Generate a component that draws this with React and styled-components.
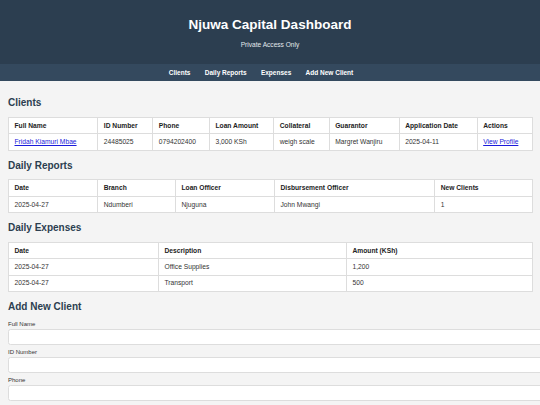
import React from "react";
import styled, { createGlobalStyle } from "styled-components";

const GlobalStyle = createGlobalStyle`
  body {
    margin: 0;
    background: #f4f4f4;
    font-family: "Liberation Sans", Arial, sans-serif;
    color: #333;
  }
`;

const Header = styled.header`
  background: #2c3e50;
  color: #fff;
  height: 64px;
  display: flex;
  flex-direction: column;
  align-items: center;
  box-sizing: border-box;
  padding-top: 17px;
`;

const Title = styled.h1`
  margin: 0;
  font-size: 13.5px;
  line-height: 16px;
  font-weight: bold;
`;

const Subtitle = styled.p`
  margin: 8px 0 0;
  font-size: 6.6px;
  line-height: 8px;
  color: #e3e8ec;
`;

const Nav = styled.nav`
  background: #34495e;
  height: 17px;
  display: flex;
  align-items: center;
  justify-content: center;
  gap: 14.3px;
  padding-right: 18px;
`;

const NavLink = styled.a`
  color: #fff;
  font-size: 6.5px;
  font-weight: bold;
  text-decoration: none;
`;

const Main = styled.main`
  padding: 7.5px 8px 20px;
`;

const SectionTitle = styled.h2`
  margin: 8.7px 0 8.3px;
  font-size: 10px;
  line-height: 11.6px;
  color: #2c3e50;
  font-weight: bold;
`;

const Table = styled.table`
  width: 524px;
  table-layout: fixed;
  border-collapse: collapse;
  background: #fff;
  font-size: 6.7px;
`;

const Col = styled.col`
  width: ${({ $w }) => $w}px;
`;

const Th = styled.th`
  border: 1px solid #ddd;
  padding: 3.8px 5.5px;
  text-align: left;
  font-weight: bold;
  color: #222;
  line-height: 7.8px;
`;

const Td = styled.td`
  border: 1px solid #ddd;
  padding: 3.8px 5.5px;
  line-height: 7.8px;
  color: #333;
  white-space: nowrap;
  overflow: hidden;
`;

const Link = styled.a`
  color: #1a1adb;
  text-decoration: underline;
`;

const Form = styled.form`
  display: flex;
  flex-direction: column;
`;

const Label = styled.label`
  display: block;
  font-size: 6px;
  line-height: 6px;
  margin: 0 0 2px;
  color: #333;
`;

const Input = styled.input`
  display: block;
  width: 100%;
  height: 14px;
  padding: 0 5.5px;
  margin: 0 0 4.2px;
  border: 1px solid #ddd;
  border-radius: 2.5px;
  background: #fff;
  font-size: 6.7px;
  font-family: inherit;
`;

const clientCols = [
  ["Full Name", 89.3],
  ["ID Number", 55],
  ["Phone", 56.7],
  ["Loan Amount", 64.3],
  ["Collateral", 55.4],
  ["Guarantor", 70],
  ["Application Date", 78],
  ["Actions", 55.3],
];

const reportCols = [
  ["Date", 89.2],
  ["Branch", 77.8],
  ["Loan Officer", 99],
  ["Disbursement Officer", 160.2],
  ["New Clients", 97.8],
];

const expenseCols = [
  ["Date", 150],
  ["Description", 188],
  ["Amount (KSh)", 186],
];

const expenses = [
  ["2025-04-27", "Office Supplies", "1,200"],
  ["2025-04-27", "Transport", "500"],
];

const fields = [
  "Full Name",
  "ID Number",
  "Phone",
  "Loan Amount",
  "Collateral",
  "Guarantor",
  "Application Date",
];

const Head = ({ cols }) => (
  <>
    <colgroup>
      {cols.map(([name, w]) => (
        <Col key={name} $w={w} />
      ))}
    </colgroup>
    <thead>
      <tr>
        {cols.map(([name]) => (
          <Th key={name}>{name}</Th>
        ))}
      </tr>
    </thead>
  </>
);

export default function App() {
  return (
    <>
      <GlobalStyle />
      <Header>
        <Title>Njuwa Capital Dashboard</Title>
        <Subtitle>Private Access Only</Subtitle>
      </Header>
      <Nav>
        <NavLink href="#clients">Clients</NavLink>
        <NavLink href="#reports">Daily Reports</NavLink>
        <NavLink href="#expenses">Expenses</NavLink>
        <NavLink href="#add">Add New Client</NavLink>
      </Nav>
      <Main>
        <section id="clients">
          <SectionTitle>Clients</SectionTitle>
          <Table>
            <Head cols={clientCols} />
            <tbody>
              <tr>
                <Td>
                  <Link href="#">Fridah Kiamuri Mbae</Link>
                </Td>
                <Td>24485025</Td>
                <Td>0794202400</Td>
                <Td>3,000 KSh</Td>
                <Td>weigh scale</Td>
                <Td>Margret Wanjiru</Td>
                <Td>2025-04-11</Td>
                <Td>
                  <Link href="#">View Profile</Link>
                </Td>
              </tr>
            </tbody>
          </Table>
        </section>

        <section id="reports">
          <SectionTitle>Daily Reports</SectionTitle>
          <Table>
            <Head cols={reportCols} />
            <tbody>
              <tr>
                <Td>2025-04-27</Td>
                <Td>Ndumberi</Td>
                <Td>Njuguna</Td>
                <Td>John Mwangi</Td>
                <Td>1</Td>
              </tr>
            </tbody>
          </Table>
        </section>

        <section id="expenses">
          <SectionTitle>Daily Expenses</SectionTitle>
          <Table>
            <Head cols={expenseCols} />
            <tbody>
              {expenses.map((row, i) => (
                <tr key={i}>
                  {row.map((cell, j) => (
                    <Td key={j}>{cell}</Td>
                  ))}
                </tr>
              ))}
            </tbody>
          </Table>
        </section>

        <section id="add">
          <SectionTitle>Add New Client</SectionTitle>
          <Form>
            {fields.map((f) => (
              <React.Fragment key={f}>
                <Label>{f}</Label>
                <Input type="text" />
              </React.Fragment>
            ))}
          </Form>
        </section>
      </Main>
    </>
  );
}
